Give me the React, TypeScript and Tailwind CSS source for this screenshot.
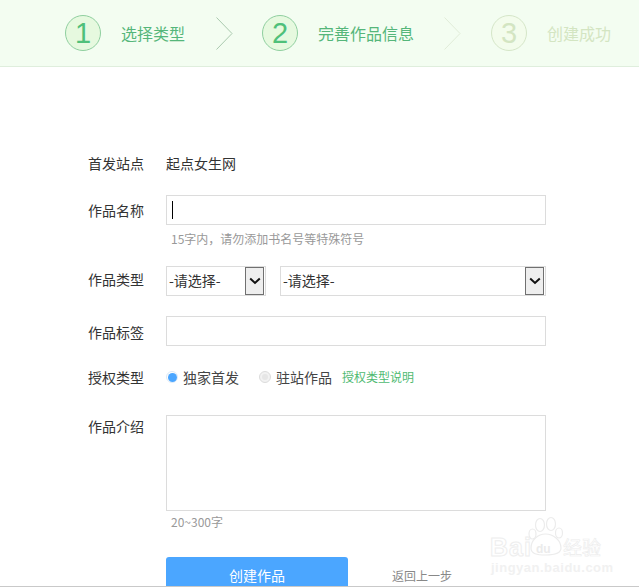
import React from "react";

const font = { fontFamily: '"Noto Sans CJK SC", "Liberation Sans", sans-serif' };

function Step({ n, label, tone }: { n: string; label: string; tone: "on" | "off" }) {
  const on = tone === "on";
  return (
    <div className="flex items-center">
      <div
        className={
          on
            ? "flex h-[36px] w-[36px] items-center justify-center rounded-full border border-[#8fcf9f] bg-[#e6f9df] text-[29px] leading-none text-[#4fc07a]"
            : "flex h-[36px] w-[36px] items-center justify-center rounded-full border border-[#d5e6c8] bg-[#f3fcec] text-[29px] leading-none text-[#d3e5c2]"
        }
        style={{ fontFamily: '"Liberation Sans", sans-serif' }}
      >
        {n}
      </div>
      <span className={on ? "ml-[20px] text-[16px] leading-none text-[#55b67a]" : "ml-[20px] text-[16px] leading-none text-[#d3e5c2]"}>
        {label}
      </span>
    </div>
  );
}

function Chevron({ color, ml, mr }: { color: string; ml: string; mr: string }) {
  return (
    <svg width="17" height="33" viewBox="0 0 17 33" fill="none" className={`${ml} ${mr}`}>
      <path d="M0.5 0.5 L16 16.5 L0.5 32.5" stroke={color} strokeWidth="1" />
    </svg>
  );
}

function Label({ children }: { children: React.ReactNode }) {
  return <div className="w-[78px] shrink-0 text-[14px] leading-[20px] text-[#333]">{children}</div>;
}

function Sel({ w }: { w: string }) {
  return (
    <div className={`${w} flex h-[30px] items-center justify-between border border-[#dcdcdc] bg-white pl-[2px] pr-[1px]`}>
      <span className="pb-[2px] text-[14px] leading-none text-[#333]">-请选择-</span>
      <div className="flex h-[28px] w-[19px] items-center justify-center border border-[#707070] bg-[#eeeeee]">
        <svg width="12" height="8" viewBox="0 0 12 8" fill="none">
          <path d="M1.2 1.5 L6 6 L10.8 1.5" stroke="#111" strokeWidth="2" />
        </svg>
      </div>
    </div>
  );
}

function Watermark() {
  return (
    <div className="absolute left-[489px] top-[516px] h-[62px] w-[120px] whitespace-nowrap">
      <svg width="36" height="40" viewBox="0 0 36 40" className="absolute left-[39px] top-0" fill="none" stroke="#ececec" strokeWidth="1.2">
        <ellipse cx="12" cy="9" rx="4.5" ry="6.5" />
        <ellipse cx="23" cy="8" rx="4.5" ry="6.5" />
        <ellipse cx="31" cy="17" rx="3.5" ry="5" />
        <ellipse cx="4.5" cy="18" rx="3.5" ry="5" />
        <path d="M3 32 C3 24 10 18 17.5 18 C25 18 33 24 33 32 C33 38 26 39 17.5 39 C9 39 3 38 3 32 Z" />
      </svg>
      <span
        className="absolute left-[1px] top-[17px] text-[25px] font-bold leading-[28px] tracking-[1px] text-transparent [-webkit-text-stroke:1px_#eeeeee]"
        style={{ fontFamily: '"Liberation Sans", sans-serif' }}
      >
        Bai
      </span>
      <span
        className="absolute left-[47px] top-[26px] text-[12px] font-bold leading-[14px] text-[#ebebeb]"
        style={{ fontFamily: '"Liberation Sans", sans-serif' }}
      >
        du
      </span>
      <span className="absolute left-[74px] top-[19px] text-[19px] leading-[24px] text-transparent [-webkit-text-stroke:0.6px_#ececec]">经验</span>
      <span
        className="absolute left-[2px] top-[44px] text-[13px] font-bold leading-[16px] tracking-[0.5px] text-[#f1f1f1]"
        style={{ fontFamily: '"Liberation Sans", sans-serif' }}
      >
        jingyan.baidu.com
      </span>
    </div>
  );
}

export default function App() {
  return (
    <div className="relative h-[588px] w-[639px] overflow-hidden bg-white" style={font}>
      <div className="flex h-[587px] flex-col overflow-hidden border-b border-[#c9c9c9]">
        <header className="flex h-[67px] shrink-0 items-center border-b border-[#dfeedd] bg-[#f3fdf1] pl-[65px]">
          <Step n="1" label="选择类型" tone="on" />
          <Chevron color="#a9c9ae" ml="ml-[31px]" mr="mr-[29px]" />
          <Step n="2" label="完善作品信息" tone="on" />
          <Chevron color="#e0ecd8" ml="ml-[30px]" mr="mr-[30px]" />
          <Step n="3" label="创建成功" tone="off" />
        </header>

        <main className="flex flex-col pl-[88px] pt-[86px]">
          <div className="flex h-[20px] items-center">
            <Label>首发站点</Label>
            <span className="text-[14px] leading-[20px] text-[#333]">起点女生网</span>
          </div>

          <div className="mt-[22px] flex">
            <div className="pt-[5px]"><Label>作品名称</Label></div>
            <div className="flex h-[30px] w-[380px] items-center border border-[#dcdcdc] pl-[5px]">
              <div className="h-[18px] w-px bg-black" />
            </div>
          </div>
          <div className="mt-[6px] h-[16px] pl-[83px] text-[12px] leading-[16px] text-[#999]">15字内，请勿添加书名号等特殊符号</div>

          <div className="mt-[19px] flex">
            <div className="pt-[3px]"><Label>作品类型</Label></div>
            <div className="flex gap-[14px]">
              <Sel w="w-[100px]" />
              <Sel w="w-[266px]" />
            </div>
          </div>

          <div className="mt-[20px] flex">
            <div className="pt-[6px]"><Label>作品标签</Label></div>
            <div className="h-[30px] w-[380px] border border-[#dcdcdc]" />
          </div>

          <div className="mt-[21px] flex h-[20px] items-center">
            <Label>授权类型</Label>
            <span className="flex h-[12px] w-[12px] items-center justify-center rounded-full border border-[#dbe9f7] bg-white">
              <span className="h-[9px] w-[9px] rounded-full bg-[#4ba6ff]" />
            </span>
            <span className="ml-[5px] text-[14px] leading-none text-[#444]">独家首发</span>
            <span className="ml-[20px] flex h-[12px] w-[12px] items-center justify-center rounded-full border border-[#dcdcdc] bg-[#f2f2f2]">
              <span className="h-[6px] w-[6px] rounded-full bg-[#e6e6e6]" />
            </span>
            <span className="ml-[5px] text-[14px] leading-none text-[#444]">驻站作品</span>
            <span className="ml-[10px] text-[12px] leading-none text-[#4fba72]">授权类型说明</span>
          </div>

          <div className="mt-[28px] flex">
            <div className="pt-[1px]"><Label>作品介绍</Label></div>
            <div className="h-[96px] w-[380px] border border-[#dcdcdc]" />
          </div>
          <div className="mt-[3px] h-[16px] pl-[83px] text-[12px] leading-[16px] text-[#999]">20~300字</div>

          <div className="mt-[27px] flex pl-[78px]">
            <div className="flex h-[40px] w-[182px] shrink-0 items-start justify-center rounded-[3px] bg-[#4ba6ff] pt-[9px] text-[14px] leading-[18px] text-white">
              创建作品
            </div>
            <span className="ml-[44px] pt-[10px] text-[12px] leading-[18px] text-[#888]">返回上一步</span>
          </div>
        </main>
      </div>
      <Watermark />
    </div>
  );
}
